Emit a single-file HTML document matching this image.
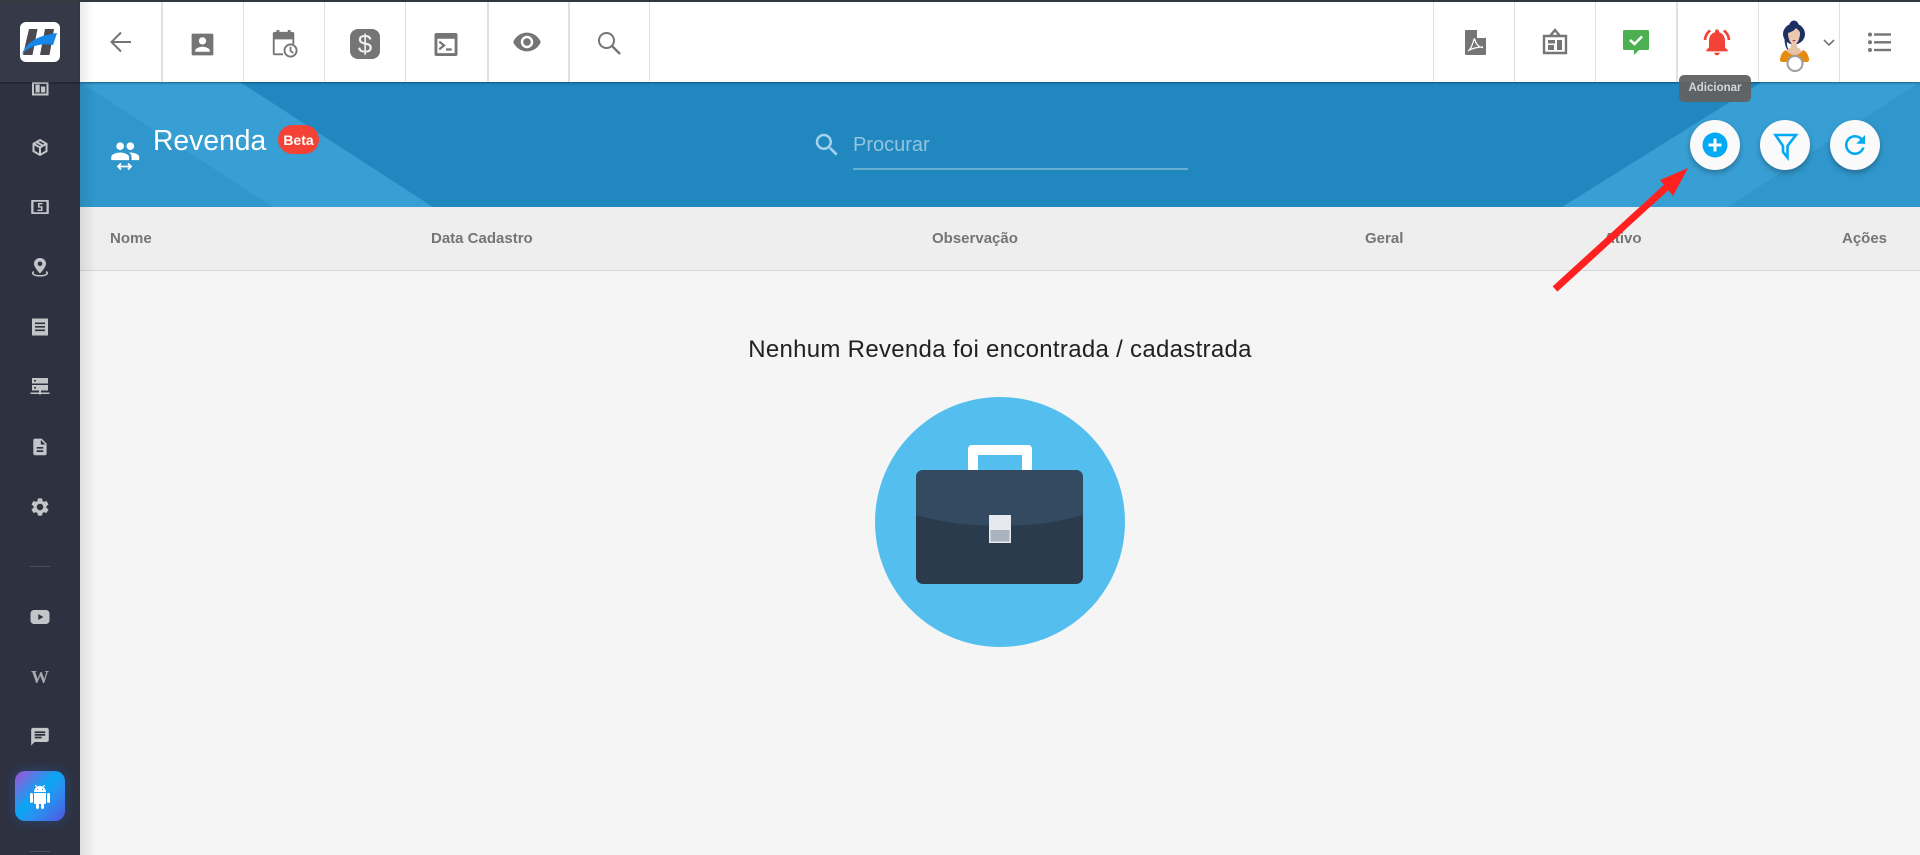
<!DOCTYPE html>
<html lang="pt"><head><meta charset="utf-8"><title>Revenda</title>
<style>
*{box-sizing:border-box}
html,body{margin:0;padding:0;width:1920px;height:855px;overflow:hidden;background:#f5f5f5;font-family:"Liberation Sans",sans-serif}
.abs{position:absolute}
svg{position:absolute;display:block}
.sep{position:absolute;top:2px;height:80px;width:1px;background:#e0e0e0}
.th{position:absolute;top:230px;font-size:15px;line-height:18px;font-weight:bold;color:#757575;white-space:nowrap}
</style></head><body>
<!-- main -->
<div class="abs" style="left:80px;top:207px;width:1840px;height:648px;background:#f5f5f5"></div>
<div class="abs" style="left:80px;top:207px;width:1840px;height:64px;background:#eeeeee;border-bottom:1px solid #d4d4d4"></div>
<!-- header -->
<svg style="left:80px;top:82px" width="1840" height="125" viewBox="80 82 1840 125">
<rect x="80" y="82" width="1840" height="125" fill="#2088be"/>
<polygon points="80,82 240,82 433,207 80,207" fill="#389fd4"/>
<polygon points="80,82 273,207 80,207" fill="#3097cc"/>
<polygon points="1562,207 1762,82 1920,82 1920,207" fill="#389fd4"/>
<polygon points="1728,207 1920,82 1920,207" fill="#3097cc"/>
</svg>
<!-- table header text -->
<div class="th" style="left:110px">Nome</div>
<div class="th" style="left:431px">Data Cadastro</div>
<div class="th" style="left:932px">Observação</div>
<div class="th" style="left:1365px">Geral</div>
<div class="th" style="left:1604px">Ativo</div>
<div class="th" style="left:1842px">Ações</div>
<!-- empty -->
<div class="abs" style="left:600px;width:800px;top:336px;text-align:center;font-size:24px;letter-spacing:.3px;line-height:28px;color:#212121;white-space:nowrap">Nenhum Revenda foi encontrada / cadastrada</div>
<svg style="left:875px;top:397px" width="250" height="250" viewBox="875 397 250 250">
<circle cx="1000" cy="522" r="125" fill="#54bfee"/>
<path d="M968 472V449a4 4 0 0 1 4-4h56a4 4 0 0 1 4 4v23h-10v-17h-44v17z" fill="#fff"/>
<rect x="916" y="470" width="167" height="114" rx="7" fill="#2b3b4e"/>
<path d="M916 515V477a7 7 0 0 1 7-7h153a7 7 0 0 1 7 7v38q-38 11-83 11t-84-11z" fill="#334a60"/>
<rect x="989" y="515" width="22" height="28" fill="#e6e9ed"/>
<rect x="990.500" y="530" width="19" height="11.500" fill="#aab2bd"/>
</svg>
<!-- header contents -->
<svg style="left:109.700px;top:135.600px" width="30.500" height="30.500" viewBox="0 0 24 24" fill="#fff"><path d="M16 11c1.660 0 2.990-1.340 2.990-3S17.660 5 16 5s-3 1.340-3 3 1.340 3 3 3zm-8 0c1.660 0 2.990-1.340 2.990-3S9.660 5 8 5 5 6.340 5 8s1.340 3 3 3zm0 2c-2.330 0-7 1.170-7 3.500V19h14v-2.500C15 14.170 10.330 13 8 13zm8 0c-.29 0-.62.020-.97.050 1.160.84 1.970 1.970 1.970 3.450V19h6v-2.500c0-2.330-4.670-3.500-7-3.500z"/></svg>
<svg style="left:115px;top:162px" width="20" height="10" viewBox="0 0 20 10" fill="none" stroke="#fff" stroke-width="1.800"><path d="M3 4.500h13M6 1.500 3 4.500l3 3M13 1.500l3 3-3 3"/></svg>
<div class="abs" style="left:153px;top:121.500px;font-size:28.300px;line-height:36px;color:#fff;white-space:nowrap">Revenda</div>
<div class="abs" style="left:278px;top:125px;width:41px;height:29px;border-radius:14.500px;background:#f44336;color:#fff;font-size:14px;font-weight:bold;line-height:30px;text-align:center">Beta</div>
<svg style="left:812px;top:130px" width="30" height="30" viewBox="0 0 24 24" fill="#a4d4ea"><path d="M15.500 14h-.79l-.28-.27C15.410 12.590 16 11.110 16 9.500 16 5.910 13.090 3 9.500 3S3 5.910 3 9.500 5.910 16 9.500 16c1.610 0 3.090-.59 4.230-1.570l.27.280v.79l5 4.990L20.490 19l-4.990-5zm-6 0C7.010 14 5 11.990 5 9.500S7.010 5 9.500 5 14 7.010 14 9.500 11.990 14 9.500 14z"/></svg>
<div class="abs" style="left:853px;top:133px;font-size:20px;line-height:24px;color:rgba(255,255,255,.5);white-space:nowrap">Procurar</div>
<div class="abs" style="left:853px;top:168px;width:335px;height:1.500px;background:rgba(255,255,255,.32)"></div>
<!-- round buttons -->
<div class="abs" style="left:1690px;top:120px;width:50px;height:50px;border-radius:50%;background:#fafafa;box-shadow:0 3px 6px rgba(0,0,0,.28)"></div>
<div class="abs" style="left:1760px;top:120px;width:50px;height:50px;border-radius:50%;background:#fafafa;box-shadow:0 3px 6px rgba(0,0,0,.28)"></div>
<div class="abs" style="left:1830px;top:120px;width:50px;height:50px;border-radius:50%;background:#fafafa;box-shadow:0 3px 6px rgba(0,0,0,.28)"></div>
<svg style="left:1700px;top:130px" width="30" height="30" viewBox="0 0 30 30"><circle cx="15" cy="15" r="12.500" fill="#03a9f4"/><path d="M15 8.500v13M8.500 15h13" stroke="#fff" stroke-width="3"/></svg>
<svg style="left:1770px;top:130px" width="30" height="32" viewBox="0 0 30 32" fill="none" stroke="#03a9f4" stroke-width="2.600"><path d="M5.500 5H26l-8.500 11v11.500L13 22V16z"/></svg>
<svg style="left:1840px;top:130px" width="30" height="30" viewBox="0 0 24 24" fill="#03a9f4"><path d="M17.650 6.350C16.200 4.900 14.210 4 12 4c-4.420 0-7.990 3.580-7.990 8s3.570 8 7.990 8c3.730 0 6.840-2.550 7.730-6h-2.080c-.82 2.330-3.040 4-5.650 4-3.310 0-6-2.690-6-6s2.690-6 6-6c1.660 0 3.140.69 4.220 1.780L13 11h7V4l-2.350 2.350z"/></svg>
<!-- arrow -->
<svg style="left:1540px;top:160px" width="160" height="140" viewBox="1540 160 160 140"><path d="M1555 289 1670 184" stroke="#ff2020" stroke-width="7" fill="none"/><polygon points="1688,168 1660,180 1673,196" fill="#ff2020"/></svg>
<!-- sidebar -->
<div class="abs" style="left:80px;top:82px;width:16px;height:773px;background:linear-gradient(90deg,rgba(0,0,0,.09),rgba(0,0,0,0))"></div>
<div class="abs" style="left:0;top:0;width:80px;height:855px;background:#2e3240"></div>
<svg style="left:0;top:82px" width="80" height="773" viewBox="0 82 80 773" fill="#c4c5c9">
<!-- dashboard box -->
<path fill-rule="evenodd" d="M32 80h16.500v15.500H32zM34 84v9.500h12.500V84z"/><path d="M35.500 84.500h4.200v8h-4.200zM41 86.500h4.200v6H41z"/>
<!-- cube -->
<g fill="none" stroke="#c4c5c9" stroke-width="2"><path d="M40 140l6.500 3.800v7.400L40 155l-6.500-3.800v-7.400zM33.500 143.800 40 147.500l6.500-3.700M40 147.500v7.500M36.500 142l6.500 3.800"/></g>
<!-- cash box -->
<path fill-rule="evenodd" d="M32 200h16a.8.8 0 0 1 .8.800v12.400a.8.8 0 0 1-.8.800H32a.8.8 0 0 1-.8-.800v-12.400a.8.8 0 0 1 .8-.800zm1.500 1.800v10.400h13v-10.400z"/><path d="M38 203h4.500v1.400h-3v1.800h3v4.800H37.500v-1.400h3.500v-2H38z"/>
<!-- pin -->
<path fill-rule="evenodd" d="M40 258c-3.600 0-6 2.700-6 5.800 0 3.800 6 9.700 6 9.700s6-5.900 6-9.700c0-3.100-2.400-5.800-6-5.800zm0 3.500a2.300 2.300 0 1 1 0 4.600 2.300 2.300 0 0 1 0-4.600z"/><path d="M33.500 271c-1.300.7-1.500 1.500-1.500 2.200 0 2 3.500 3.300 8 3.300s8-1.300 8-3.300c0-.7-.2-1.500-1.500-2.200l-.8 1.300c.5.300.6.600.6.900 0 .9-2.800 1.800-6.300 1.800s-6.300-.9-6.300-1.800c0-.3.1-.6.600-.9z"/>
<!-- receipt -->
<path fill-rule="evenodd" d="M32 318.500h16v17H32zM35 322.500v1.600h10v-1.600zm0 3.500v1.600h10V326zm0 3.500v1.600h10v-1.600z"/>
<!-- server -->
<path fill-rule="evenodd" d="M32 378h16v5.500H32zM34 380v1.500h2V380zM32 385h16v5.500h-7v2h8.500v1.500H41l-1 1-1-1h-8.500v-1.500H39v-2h-7zM34 387v1.500h2V387z"/>
<!-- doc -->
<path transform="translate(30 437) scale(.83)" d="M14 2H6c-1.100 0-1.990.9-1.990 2L4 20c0 1.100.89 2 1.990 2H18c1.100 0 2-.9 2-2V8l-6-6zm2 16H8v-2h8v2zm0-4H8v-2h8v2zm-3-5V3.500L18.500 9H13z"/>
<!-- gear -->
<path transform="translate(29.200 496.200) scale(.9)" d="M19.140 12.940c.04-.3.060-.61.060-.94 0-.32-.02-.64-.07-.94l2.030-1.580c.18-.14.23-.41.12-.61l-1.920-3.320c-.12-.22-.37-.29-.59-.22l-2.390.96c-.5-.38-1.030-.7-1.620-.94l-.36-2.540c-.04-.24-.24-.41-.48-.41h-3.840c-.24 0-.43.17-.47.41l-.36 2.540c-.59.24-1.130.57-1.620.94l-2.390-.96c-.22-.08-.47 0-.59.22L2.740 8.870c-.12.21-.08.47.12.61l2.030 1.580c-.05.3-.09.63-.09.94s.02.64.07.94l-2.030 1.580c-.18.14-.23.41-.12.61l1.920 3.320c.12.22.37.29.59.22l2.390-.96c.5.38 1.030.7 1.620.94l.36 2.540c.05.24.24.41.48.41h3.840c.24 0 .44-.17.47-.41l.36-2.540c.59-.24 1.130-.56 1.620-.94l2.390.96c.22.08.47 0 .59-.22l1.920-3.320c.12-.22.070-.47-.12-.61l-2.010-1.580zM12 15.600c-1.980 0-3.600-1.620-3.600-3.600s1.620-3.600 3.600-3.600 3.600 1.620 3.600 3.600-1.620 3.600-3.600 3.600z"/>
<rect x="30" y="566" width="20" height="1" fill="#4b4f5c"/>
<!-- youtube -->
<path fill-rule="evenodd" d="M34 610h12a3.500 3.500 0 0 1 3.500 3.500v7a3.500 3.500 0 0 1-3.500 3.500H34a3.500 3.500 0 0 1-3.500-3.500v-7A3.500 3.500 0 0 1 34 610zm4.300 4v6l5-3z"/>
<!-- chat -->
<path transform="translate(29.400 726.100) scale(.88)" d="M20 2H4c-1.100 0-1.990.9-1.990 2L2 22l4-4h14c1.100 0 2-.9 2-2V4c0-1.100-.9-2-2-2zM6 9h12v2H6V9zm8 5H6v-2h8v2zm4-6H6V6h12v2z"/>
<rect x="30" y="851" width="20" height="1" fill="#4b4f5c"/>
</svg>
<div class="abs" style="left:20px;top:664px;width:40px;text-align:center;font-family:'Liberation Serif',serif;font-size:18px;font-weight:bold;line-height:26px;color:#a9aaae">W</div>
<div class="abs" style="left:15px;top:771px;width:50px;height:50px;border-radius:10px;background:linear-gradient(135deg,#a64fd6 0%,#09a6f3 45%,#2b8ff0 65%,#4f55e0 100%);box-shadow:0 0 12px rgba(40,110,230,.35)"></div>
<svg style="left:28px;top:785px" width="24" height="24" viewBox="0 0 24 24" fill="#fff"><path d="M6 18c0 .55.45 1 1 1h1v3.500c0 .83.67 1.500 1.500 1.500s1.500-.67 1.500-1.500V19h2v3.500c0 .83.67 1.500 1.500 1.500s1.500-.67 1.500-1.500V19h1c.55 0 1-.45 1-1V8H6v10zM3.500 8C2.670 8 2 8.670 2 9.500v7c0 .83.67 1.500 1.500 1.500S5 17.330 5 16.500v-7C5 8.670 4.330 8 3.500 8zm17 0c-.83 0-1.500.67-1.500 1.500v7c0 .83.67 1.500 1.500 1.500s1.500-.67 1.500-1.500v-7c0-.83-.67-1.500-1.500-1.500zm-4.970-5.840l1.300-1.300c.2-.2.2-.51 0-.71-.2-.2-.51-.2-.71 0l-1.480 1.480C13.850 1.230 12.950 1 12 1c-.96 0-1.860.23-2.660.63L7.850.15c-.2-.2-.51-.2-.71 0-.2.2-.2.51 0 .71l1.310 1.310C6.970 3.260 6 5.010 6 7h12c0-1.990-.97-3.750-2.470-4.840zM10 5H9V4h1v1zm5 0h-1V4h1v1z"/></svg>
<!-- sidebar top -->
<div class="abs" style="left:0;top:0;width:80px;height:82px;background:#363a48;box-shadow:0 1px 2px rgba(0,0,0,.4)"></div>
<div class="abs" style="left:20px;top:22px;width:40px;height:40px;border-radius:6px;background:#fff"></div>
<svg style="left:20px;top:22px" width="40" height="40" viewBox="0 0 40 40"><path d="M9 7h8.500L12.500 33H3zM25 7h9L29.500 33H20z" fill="#4a4a4f"/><path d="M2 32C7 19 20 13 37 11L33 23C20 21 10 24 2 32z" fill="#1686e8"/></svg>
<!-- top bar -->
<div class="abs" style="left:0;top:0;width:1920px;height:2px;background:#343a40"></div>
<div class="abs" style="left:80px;top:2px;width:1840px;height:80px;background:#fff;box-shadow:0 1px 2px rgba(0,40,70,.55)"></div>
<div class="abs" style="left:80px;top:2px;width:14px;height:80px;background:linear-gradient(90deg,rgba(0,0,0,.08),rgba(0,0,0,0))"></div>
<div class="sep" style="left:161px;width:2px"></div><div class="sep" style="left:243px"></div><div class="sep" style="left:324px"></div><div class="sep" style="left:405px"></div><div class="sep" style="left:487px;width:2px"></div><div class="sep" style="left:568px;width:2px"></div><div class="sep" style="left:649px"></div>
<div class="sep" style="left:1433px"></div><div class="sep" style="left:1514px"></div><div class="sep" style="left:1595px"></div><div class="sep" style="left:1676px;width:2px"></div><div class="sep" style="left:1758px"></div><div class="sep" style="left:1839px"></div>
<!-- toolbar icons -->
<svg style="left:109px;top:30px" width="24" height="24" viewBox="0 0 24 24" fill="none" stroke="#757575" stroke-width="2"><path d="M22 12H3.500M12 2.500 2.500 12l9.500 9.500"/></svg>
<svg style="left:187.500px;top:30px" width="29" height="29" viewBox="0 0 24 24" fill="#757575"><path d="M3 4v16c0 .6.4 1 1 1h16c.6 0 1-.4 1-1V4c0-.6-.4-1-1-1H4c-.6 0-1 .4-1 1zm12 5c0 1.660-1.340 3-3 3s-3-1.340-3-3 1.340-3 3-3 3 1.340 3 3zm-9 8c0-2 4-3.100 6-3.100s6 1.100 6 3.100v1H6v-1z"/></svg>
<svg style="left:270px;top:29px" width="28" height="30" viewBox="0 0 30 32"><path d="M5 3h19a2 2 0 0 1 2 2v11h-2v-5H5v15h9v2H5a2 2 0 0 1-2-2V5a2 2 0 0 1 2-2z" fill="#757575"/><rect x="7" y="1" width="3" height="4" fill="#757575"/><rect x="19" y="1" width="3" height="4" fill="#757575"/><circle cx="22" cy="23" r="6.500" fill="#fff" stroke="#757575" stroke-width="2"/><path d="M22 19v4.500l3 2" fill="none" stroke="#757575" stroke-width="1.800"/></svg>
<div class="abs" style="left:350px;top:29px;width:30px;height:30px;border-radius:8px;background:#757575;color:#f2f2f2;font-size:26px;line-height:30px;text-align:center">$</div>
<svg style="left:433px;top:33px" width="26" height="23" viewBox="0 0 26 24"><path fill-rule="evenodd" d="M3 0h20a2 2 0 0 1 2 2v20a2 2 0 0 1-2 2H3a2 2 0 0 1-2-2V2a2 2 0 0 1 2-2zm1 6v15h18V6z" fill="#757575"/><path d="M6 9l5 4-5 4" fill="none" stroke="#757575" stroke-width="2.300"/><rect x="13" y="16" width="6" height="2.400" fill="#757575"/></svg>
<svg style="left:512.300px;top:27.300px" width="30" height="30" viewBox="0 0 24 24" fill="#757575"><path d="M12 4.500C7 4.500 2.730 7.610 1 12c1.730 4.390 6 7.500 11 7.500s9.270-3.110 11-7.500c-1.730-4.390-6-7.500-11-7.500zM12 17c-2.760 0-5-2.240-5-5s2.240-5 5-5 5 2.240 5 5-2.240 5-5 5zm0-8c-1.660 0-3 1.340-3 3s1.340 3 3 3 3-1.340 3-3-1.340-3-3-3z"/></svg>
<svg style="left:597px;top:31px" width="24" height="24" viewBox="0 0 24 24" fill="none" stroke="#757575" stroke-width="2"><circle cx="9.500" cy="9.500" r="7.500"/><path d="M15 15l8 8" stroke-width="2.400"/></svg>
<!-- right icons -->
<svg style="left:1465px;top:30px" width="21" height="25" viewBox="0 0 21 25"><path d="M1 0h11l9 8v16a1 1 0 0 1-1 1H1a1 1 0 0 1-1-1V1a1 1 0 0 1 1-1z" fill="#757575"/><path d="M12 0v8h9z" fill="#fff"/><path d="M3 21c2-1 4-5 5.500-10 .5-2 1-3 1.500-1 .5 3 3 6 5 7 2 .5 3 .5 3 .5M5 20c3-2 9-3 13-3" fill="none" stroke="#fff" stroke-width="1.300"/></svg>
<svg style="left:1542px;top:28px" width="26" height="28" viewBox="0 0 26 28"><path d="M2 8h22v17H2zM8 8l5-6 5 6" fill="none" stroke="#757575" stroke-width="2.400"/><rect x="6" y="12" width="7" height="3.500" fill="#757575"/><rect x="6" y="17" width="6" height="5" fill="#757575"/><rect x="15" y="12" width="5" height="10" fill="#757575"/></svg>
<svg style="left:1623px;top:30px" width="26" height="25" viewBox="0 0 26 25"><path d="M1.500 0h23A1.500 1.500 0 0 1 26 1.500v17a1.500 1.500 0 0 1-1.500 1.500H16l-5 5v-5H1.500A1.500 1.500 0 0 1 0 18.500v-17A1.500 1.500 0 0 1 1.500 0z" fill="#4caf50"/><path d="M7 10l4.500 4L19 6.500" fill="none" stroke="#fff" stroke-width="2.600"/></svg>
<svg style="left:1701px;top:26px" width="32" height="32" viewBox="0 0 24 24" fill="#f44336"><path d="M7.580 4.080L6.150 2.650C3.750 4.480 2.170 7.300 2.030 10.500h2c.15-2.650 1.510-4.970 3.550-6.420zm12.390 6.420h2c-.15-3.200-1.730-6.020-4.120-7.850l-1.420 1.430c2.020 1.450 3.390 3.770 3.540 6.420zM18 11c0-3.070-1.640-5.640-4.500-6.320V4c0-.83-.67-1.500-1.500-1.500s-1.500.67-1.500 1.500v.68C7.630 5.360 6 7.920 6 11v5l-2 2v1h16v-1l-2-2v-5zm-6 11c.14 0 .27-.01.4-.04.65-.14 1.180-.58 1.440-1.180.1-.24.15-.5.15-.78h-4c.01 1.100.9 2 2.010 2z"/></svg>
<!-- avatar -->
<svg style="left:1770px;top:16px" width="50" height="58" viewBox="1770 16 50 58">
<circle cx="1794" cy="25" r="4.500" fill="#1c2f63"/>
<ellipse cx="1794" cy="34" rx="11" ry="10.500" fill="#1c2f63"/>
<path d="M1785 36c-1 5 0 10 2.500 14l1-.5c-2-4-2-8-1-12z" fill="#1c2f63"/>
<path d="M1789 48c2 0 2-1 2-4h6c0 3 0 4 2 4l3 4-8 5-8-5z" fill="#e8c2a6"/>
<path d="M1788 33c3-1 6-2 8-5 2 2 4 3 4 5 0 6-3 12-6 12s-6-6-6-12z" fill="#ecc9ae"/>
<path d="M1792 40h4l-2 1.500z" fill="#b0395a"/>
<path d="M1786 50c2 3 5 5 8.500 5s6.500-2 8.500-5c3 1 5 4 6 9 .3 2-1 3-3 3h-23c-2 0-3.300-1-3-3 1-5 3-8 6-9z" fill="#e88a10"/>
<circle cx="1795" cy="63.500" r="7.500" fill="#fff" stroke="#9e9e9e" stroke-width="2"/>
</svg>
<svg style="left:1822px;top:38px" width="14" height="10" viewBox="0 0 14 10"><path d="M2 2l5 5 5-5" fill="none" stroke="#757575" stroke-width="1.600"/></svg>
<svg style="left:1866px;top:30px" width="28" height="24" viewBox="0 0 28 24" fill="#757575"><circle cx="4" cy="4.500" r="2"/><circle cx="4" cy="12.300" r="2"/><circle cx="4" cy="20" r="2"/><rect x="8" y="3.300" width="17" height="2.400"/><rect x="8" y="11.100" width="17" height="2.400"/><rect x="8" y="18.800" width="17" height="2.400"/></svg>
<!-- tooltip -->
<div class="abs" style="left:1679px;top:75px;width:72px;height:27px;border-radius:5px;background:rgba(97,97,97,.95);color:#d6d6d6;font-size:11.500px;font-weight:bold;line-height:27px;text-align:center;white-space:nowrap">Adicionar</div>
</body></html>
